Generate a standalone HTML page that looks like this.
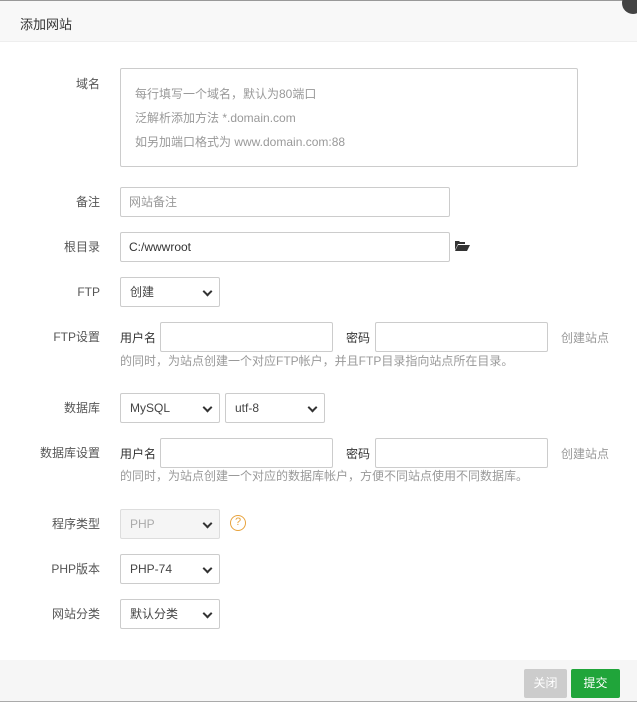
<!DOCTYPE html>
<html><head><meta charset="utf-8"><style>
*{box-sizing:border-box;margin:0;padding:0}
body{width:637px;height:702px;background:#fff;font-family:"Liberation Sans","Noto Sans CJK SC",sans-serif;font-size:12px;color:#555;position:relative;overflow:hidden}
.a{position:absolute}
.hd{left:0;top:0;width:637px;height:42px;background:#f8f8f8;border-top:1px solid #999;border-bottom:1px solid #eee}
.lb{position:absolute;right:537px;height:16px;line-height:16px;color:#555;white-space:nowrap}
.in{position:absolute;border:1px solid #ccc;border-radius:2px;height:30px;line-height:28px;padding-left:8px;color:#555}
.sel{position:absolute;border:1px solid #ccc;border-radius:2px;height:30px;line-height:28px;padding-left:9px;color:#444;background:#fff}
.sel:after{content:"";position:absolute;right:8px;top:10px;width:5px;height:5px;border-right:2px solid #333;border-bottom:2px solid #333;transform:rotate(45deg)}
.gray{color:#999}
</style></head><body>
<div class="a hd"></div>
<div class="a" style="left:20px;top:14px;font-size:13px;color:#333">添加网站</div>
<div class="a" style="left:622px;top:-8px;width:22px;height:22px;border-radius:50%;background:#444"></div>

<div class="lb" style="top:76px">域名</div>
<div class="in" style="left:120px;top:68px;width:458px;height:99px;line-height:24px;padding:13px 0 0 14px;color:#999">每行填写一个域名，默认为80端口<br>泛解析添加方法 *.domain.com<br>如另加端口格式为 www.domain.com:88</div>

<div class="lb" style="top:194px">备注</div>
<div class="in gray" style="left:120px;top:187px;width:330px">网站备注</div>

<div class="lb" style="top:239px">根目录</div>
<div class="in" style="left:120px;top:232px;width:330px;color:#333">C:/wwwroot</div>
<svg class="a" style="left:455px;top:240px" width="15" height="11" viewBox="0 0 15 11"><path d="M0 1h4l1 1h5v2H3L0 10z" fill="#333"/><path d="M3 5h12l-3 6H0z" fill="#333"/></svg>

<div class="lb" style="top:284px">FTP</div>
<div class="sel" style="left:120px;top:277px;width:100px">创建</div>

<div class="lb" style="top:329px">FTP设置</div>
<div class="a" style="left:120px;top:329px;color:#333">用户名</div>
<div class="in" style="left:160px;top:322px;width:173px"></div>
<div class="a" style="left:346px;top:329px;color:#333">密码</div>
<div class="in" style="left:375px;top:322px;width:173px"></div>
<div class="a gray" style="left:561px;top:329px">创建站点</div>
<div class="a gray" style="left:120px;top:352px">的同时，为站点创建一个对应FTP帐户，并且FTP目录指向站点所在目录。</div>

<div class="lb" style="top:400px">数据库</div>
<div class="sel" style="left:120px;top:393px;width:100px">MySQL</div>
<div class="sel" style="left:225px;top:393px;width:100px">utf-8</div>

<div class="lb" style="top:445px">数据库设置</div>
<div class="a" style="left:120px;top:445px;color:#333">用户名</div>
<div class="in" style="left:160px;top:438px;width:173px"></div>
<div class="a" style="left:346px;top:445px;color:#333">密码</div>
<div class="in" style="left:375px;top:438px;width:173px"></div>
<div class="a gray" style="left:561px;top:445px">创建站点</div>
<div class="a gray" style="left:120px;top:467px">的同时，为站点创建一个对应的数据库帐户，方便不同站点使用不同数据库。</div>

<div class="lb" style="top:516px">程序类型</div>
<div class="sel" style="left:120px;top:509px;width:100px;background:#f5f5f5;color:#aaa;border-color:#ddd">PHP</div>
<div class="a" style="left:230px;top:515px;width:16px;height:16px;border:1.5px solid #e8a33d;border-radius:50%;color:#e8a33d;font-size:11px;line-height:13px;text-align:center">?</div>

<div class="lb" style="top:561px">PHP版本</div>
<div class="sel" style="left:120px;top:554px;width:100px">PHP-74</div>

<div class="lb" style="top:606px">网站分类</div>
<div class="sel" style="left:120px;top:599px;width:100px">默认分类</div>

<div class="a" style="left:0;top:660px;width:637px;height:42px;background:#f6f6f6;border-bottom:1px solid #aaa"></div>
<div class="a" style="left:524px;top:669px;width:43px;height:29px;background:#ccc;color:#fff;text-align:center;line-height:29px;border-radius:2px">关闭</div>
<div class="a" style="left:571px;top:669px;width:49px;height:29px;background:#20a53a;color:#fff;text-align:center;line-height:29px;border-radius:2px">提交</div>
</body></html>
